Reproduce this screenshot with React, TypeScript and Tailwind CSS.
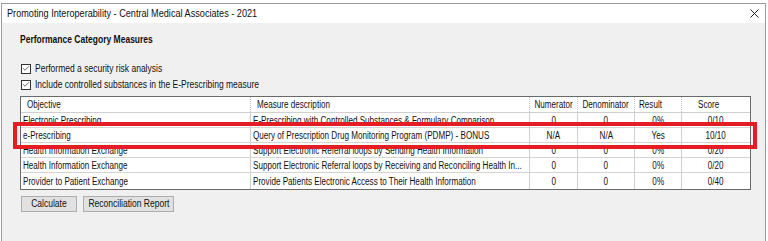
import type { ReactNode } from 'react';
import { Check } from 'lucide-react';

const font = { fontFamily: '"Liberation Sans", Arial, sans-serif' };

const rows = [
  { objective: 'Electronic Prescribing', measure: 'E-Prescribing with Controlled Substances & Formulary Comparison', num: '0', den: '0', result: '0%', score: '0/10' },
  { objective: 'e-Prescribing', measure: 'Query of Prescription Drug Monitoring Program (PDMP) - BONUS', num: 'N/A', den: 'N/A', result: 'Yes', score: '10/10' },
  { objective: 'Health Information Exchange', measure: 'Support Electronic Referral loops by Sending Health Information', num: '0', den: '0', result: '0%', score: '0/20' },
  { objective: 'Health Information Exchange', measure: 'Support Electronic Referral loops by Receiving and Reconciling Health In...', num: '0', den: '0', result: '0%', score: '0/20' },
  { objective: 'Provider to Patient Exchange', measure: 'Provide Patients Electronic Access to Their Health Information', num: '0', den: '0', result: '0%', score: '0/40' },
];

const cols = 'grid grid-cols-[230px_279px_48px_57px_47px_68px]';

// the WinForms text in the shot is narrow, so squeeze Liberation Sans horizontally
function L({ children }: { children: ReactNode }) {
  return <span className="inline-block whitespace-nowrap scale-x-[0.81] origin-left">{children}</span>;
}
function C({ children }: { children: ReactNode }) {
  return <span className="inline-block whitespace-nowrap scale-x-[0.81] origin-center">{children}</span>;
}

function CheckRow({ label }: { label: string }) {
  return (
    <div className="flex items-center h-[13px] pl-[1px]">
      <span className="shrink-0 w-[10px] h-[10px] border border-[#333] bg-white flex items-center justify-center">
        <Check size={9} strokeWidth={2} className="text-[#222]" />
      </span>
      <span className="ml-[4px] text-[10.5px] text-[#111]">
        <L>{label}</L>
      </span>
    </div>
  );
}

export default function App() {
  return (
    <div className="relative w-[768px] h-[241px] overflow-hidden bg-white" style={font}>
      <div className="h-[3px] bg-white" />
      <div className="ml-[1px] w-[765px] h-[240px] border-l border-t border-r border-[#9a9a9a]">
        {/* Title bar */}
        <div className="h-[19px] bg-white flex items-center justify-between pl-[5px] pr-[6px]">
          <span className="text-[11px] text-[#111]">
            <span className="inline-block whitespace-nowrap scale-x-[0.83] origin-left">
              Promoting Interoperability - Central Medical Associates - 2021
            </span>
          </span>
          <svg width="9" height="9" viewBox="0 0 9 9">
            <path d="M0.5 0.5 L8.5 8.5 M8.5 0.5 L0.5 8.5" stroke="#222" strokeWidth="1" />
          </svg>
        </div>

        {/* Body */}
        <div className="h-full bg-[#f0f0f0] pl-[18px] pt-[11px]">
          <div className="h-[12px] flex items-center text-[10.5px] font-bold text-[#111]">
            <L>Performance Category Measures</L>
          </div>

          <div className="mt-[16px] flex flex-col gap-[3px]">
            <CheckRow label="Performed a security risk analysis" />
            <CheckRow label="Include controlled substances in the E-Prescribing measure" />
          </div>

          {/* Grid */}
          <div className="mt-[5px] w-[731px] border border-[#6a6a6a] bg-white text-[10px] text-[#111]">
            <div className={`${cols} h-[16px] border-b border-[#cfcfcf]`}>
              <div className="h-full flex items-center pl-[6px] border-r border-dotted border-[#c4c4c4]"><L>Objective</L></div>
              <div className="h-full flex items-center pl-[6px] border-r border-dotted border-[#c4c4c4]"><L>Measure description</L></div>
              <div className="h-full flex items-center justify-center border-r border-dotted border-[#c4c4c4]"><C>Numerator</C></div>
              <div className="h-full flex items-center justify-center border-r border-dotted border-[#c4c4c4]"><C>Denominator</C></div>
              <div className="h-full flex items-center pl-[4px] border-r border-dotted border-[#c4c4c4]"><L>Result</L></div>
              <div className="h-full flex items-center pl-[16px]"><L>Score</L></div>
            </div>
            {rows.map((r, i) => (
              <div
                key={i}
                className={`${cols} ${i === rows.length - 1 ? 'h-[16px]' : 'h-[15px] border-b border-[#d4d4d4]'}`}
              >
                <div className="h-full flex items-center pl-[2px] border-r border-[#d0d0d0] overflow-hidden"><L>{r.objective}</L></div>
                <div className="h-full flex items-center pl-[2px] border-r border-[#d0d0d0] overflow-hidden"><L>{r.measure}</L></div>
                <div className="h-full flex items-center justify-center border-r border-[#d0d0d0]"><C>{r.num}</C></div>
                <div className="h-full flex items-center justify-center border-r border-[#d0d0d0]"><C>{r.den}</C></div>
                <div className="h-full flex items-center justify-center border-r border-[#d0d0d0]"><C>{r.result}</C></div>
                <div className="h-full flex items-center justify-center"><C>{r.score}</C></div>
              </div>
            ))}
          </div>

          {/* Buttons */}
          <div className="mt-[6px] flex gap-[6px] pl-[1px] text-[10.5px] text-[#111]">
            <button className="w-[56px] h-[16px] bg-[#e1e1e1] border border-[#adadad] flex items-center justify-center">
              <C>Calculate</C>
            </button>
            <button className="w-[91px] h-[16px] bg-[#e1e1e1] border border-[#adadad] flex items-center justify-center">
              <C>Reconciliation Report</C>
            </button>
          </div>
        </div>
      </div>

      {/* Highlight */}
      <div className="absolute left-[13px] top-[122px] w-[744px] h-[27px] border-4 border-[#e41c23]" />
    </div>
  );
}
